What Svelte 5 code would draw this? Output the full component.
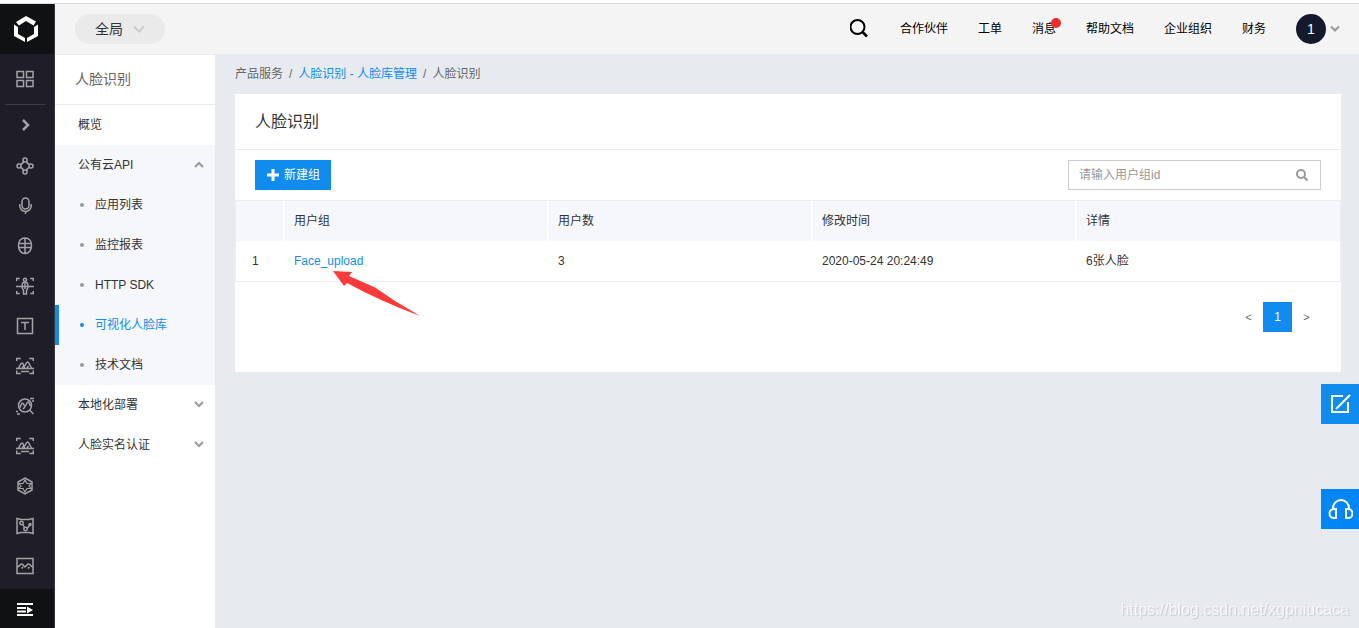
<script lang="ts">
	let region = 'global';
	let keyword = '';

	const topLinks = [
		{ title: '合作伙伴' },
		{ title: '工单' },
		{ title: '消息', unread: true },
		{ title: '帮助文档' },
		{ title: '企业组织' },
		{ title: '财务' }
	];

	const products = [
		{ name: 'nodes', label: '云服务' },
		{ name: 'mic', label: '语音技术' },
		{ name: 'globe', label: '人脸识别' },
		{ name: 'body', label: '人体分析' },
		{ name: 'text', label: '文字识别' },
		{ name: 'image', label: '图像识别' },
		{ name: 'search', label: '图像搜索' },
		{ name: 'image', label: '图像审核' },
		{ name: 'hexagon', label: '知识图谱' },
		{ name: 'graph', label: '智能创作' },
		{ name: 'picture', label: '图像增强' }
	];

	let menu = [
		{ title: '概览', open: false, entries: [] as string[] },
		{
			title: '公有云API',
			open: true,
			entries: ['应用列表', '监控报表', 'HTTP SDK', '可视化人脸库', '技术文档']
		},
		{ title: '本地化部署', open: false, entries: ['离线识别SDK', '私有化部署'] },
		{ title: '人脸实名认证', open: false, entries: ['方案管理', '数据统计'] }
	];
	let current = '可视化人脸库';

	const groups = [{ name: 'Face_upload', users: 3, updated: '2020-05-24 20:24:49', faces: 6 }];

	function toggle(title: string) {
		menu = menu.map((item) => (item.title === title ? { ...item, open: !item.open } : item));
	}
</script>

<div class="page">
	<aside class="rail">
		<a href="#home" class="logo" aria-label="首页">
			<svg width="26" height="28" viewBox="0 0 26 28">
				<path d="M13 1 23 6.500 20.500 10.500 13 6 6 10.500 3 7z" />
				<path d="M1 9.500 5 12V19L12 23V27L1 21z" />
				<path d="M25 9.500V21L14 27V23L21 19V12z" />
			</svg>
		</a>
		<a href="#all" class="all" aria-label="全部产品">
			<svg width="18" height="18" viewBox="0 0 18 18">
				<path d="M1 1.500h6.500v6H1zM10.500 1.500H17v6h-6.500zM1 10.500h6.500v6H1zM10.500 10.500H17v6h-6.500z" />
			</svg>
		</a>
		<button class="expand" aria-label="展开">
			<svg width="12" height="14" viewBox="0 0 12 14"><path d="m4 2 5 5-5 5" stroke-width="2.500" /></svg>
		</button>
		<nav>
			{#each products as product}
				<a href="#product" aria-label={product.label}>
					<svg width="18" height="18" viewBox="0 0 18 18">
						{#if product.name === 'nodes'}
							<circle cx="9" cy="3" r="2" /><circle cx="9" cy="15" r="2" />
							<circle cx="3" cy="9" r="2" /><circle cx="15" cy="9" r="2" />
							<path d="M7.500 4.500C7 6.500 6.500 7 4.500 7.500M10.500 4.500c.500 2 1 2.500 3 3M4.500 10.500c2 .500 2.500 1 3 3M13.500 10.500c-2 .500-2.500 1-3 3" stroke-width="1.800" />
						{:else if product.name === 'mic'}
							<rect x="6" y="1" width="7" height="11" rx="3.500" />
							<path d="M3.800 7v2a5.700 5.500 0 0 0 11.400 0V7M9.500 14.500V17" />
						{:else if product.name === 'globe'}
							<path d="M9 1c4 0 6.500 3 6.500 7.500S13 16.500 9 16.500s-6.500-3.500-6.500-8S5 1 9 1zM9 1v15.500M2.500 6.500h13M2.500 10.500h13" />
						{:else if product.name === 'body'}
							<path d="M.700 4V1.500h3M14.300 1.500h3V4M.700 14v2.500h3M14.300 16.500h3V14M0 9.500h18" />
							<circle cx="9" cy="2.800" r="1.600" />
							<path d="M9 5C7 5 6 7 6 9.500c0 2 1 2.500 1.500 4V17h3v-3.500c.500-1.500 1.500-2 1.500-4C12 7 11 5 9 5zM9 6v6" />
						{:else if product.name === 'text'}
							<path d="M1.500 1.500h15v15h-15zM5 5.500h8M9 5.500V13" />
						{:else if product.name === 'image'}
							<path d="M.700 4V1.500h4M13.300 1.500h4V4M.700 13.500v3h4M13.300 16.500h4v-3M5 14.500h8M0 11.500h18" />
							<path d="M2.500 11C4 9 4.500 6 6 6s1.500 3 2.500 3S10 5 11.500 5s2.500 4 4 6M6 11l1.500-2L9 11m2 0 1.500-2" />
						{:else if product.name === 'search'}
							<circle cx="9" cy="8.500" r="6.500" />
							<path d="m13.500 13 4 4M3.500 11C5 9.500 5 6 6.500 6S8 9.500 9 9.500 10.500 5 12 5s1.500 3 2.500 4M7 12l2-2M0 14.500h2M1 17h3M14 1.500h4M16 4h2" />
						{:else if product.name === 'hexagon'}
							<path d="m9 1 7 4v8l-7 4-7-4V5z" />
							<path d="m9 3 2 3.500h4L13 9l2 2.500h-4L9 15l-2-3.500H3L5 9 3 6.500h4z" stroke-width="1.200" />
						{:else if product.name === 'graph'}
							<path d="M1 1.500 5 2.500h8l4-1v15l-4-1H5l-4 1zM6.500 7l2 3.500M11 11.500l2.500-3" />
							<circle cx="5.500" cy="6" r="1.700" /><circle cx="9.500" cy="12" r="1.700" /><circle cx="14" cy="7.500" r="1" />
						{:else}
							<path d="M1 1.500h16v15H1zM1 10c3 0 2.500-3 4.500-3S8 10 9 10s1.500-3 3.500-3S15 10 17 10M5.500 11.500 7 10M12 11.500l1.500-1.500" />
						{/if}
					</svg>
				</a>
			{/each}
		</nav>
		<button class="collapse" aria-label="收起导航">
			<svg width="16" height="14" viewBox="0 0 16 14">
				<path d="M0 2h16M0 6h9M0 9.500h9M0 13h16" />
				<path class="tip" d="m10 4.500 6 3.500-6 3.500z" />
			</svg>
		</button>
	</aside>

	<div class="content">
		<header>
			<label class="region">
				<select bind:value={region} aria-label="区域">
					<option value="global">全局</option>
				</select>
				<svg width="12" height="8" viewBox="0 0 12 8"><path d="m1 1.500 5 5 5-5" /></svg>
			</label>
			<div class="top-right">
				<button class="find" aria-label="搜索">
					<svg width="20" height="20" viewBox="0 0 20 20">
						<circle cx="7.500" cy="8" r="7" /><path d="m12.500 13 4.500 4.500" stroke-width="2.500" />
					</svg>
				</button>
				{#each topLinks as link}
					<a href="#top" class:unread={link.unread}>{link.title}</a>
				{/each}
				<button class="user" aria-label="账户">
					<span>1</span>
					<svg width="10" height="8" viewBox="0 0 10 8"><path d="m1 1.500 4 4 4-4" /></svg>
				</button>
			</div>
		</header>

		<div class="body">
			<nav class="menu">
				<h2>人脸识别</h2>
				<ul>
					{#each menu as item}
						<li class:open={item.open}>
							{#if item.entries.length}
								<button class="row" on:click={() => toggle(item.title)}>
									{item.title}
									<svg width="10" height="8" viewBox="0 0 10 8">
										<path d={item.open ? 'm1 6 4-4 4 4' : 'm1 1 4 4 4-4'} />
									</svg>
								</button>
							{:else}
								<a href="#overview" class="row">{item.title}</a>
							{/if}
							{#if item.open}
								<ul>
									{#each item.entries as entry}
										<li>
											<a href="#entry" class="entry" class:active={entry === current} on:click={() => (current = entry)}>
												{entry}
											</a>
										</li>
									{/each}
								</ul>
							{/if}
						</li>
					{/each}
				</ul>
			</nav>

			<main>
				<div class="breadcrumb">
					<span>产品服务</span><i>/</i><a href="#library">人脸识别 - 人脸库管理</a><i>/</i><span>人脸识别</span>
				</div>
				<section class="card">
					<h1>人脸识别</h1>
					<div class="toolbar">
						<button class="create">
							<svg width="12" height="12" viewBox="0 0 12 12"><path d="M6 0v12M0 6h12" /></svg>
							新建组
						</button>
						<label class="search">
							<input type="text" placeholder="请输入用户组id" aria-label="用户组id" bind:value={keyword} />
							<svg width="12" height="12" viewBox="0 0 12 12">
								<circle cx="5" cy="5" r="4" /><path d="m8 8 3.500 3.500" />
							</svg>
						</label>
					</div>
					<table>
						<thead>
							<tr>
								<th class="index"></th>
								<th>用户组</th>
								<th>用户数</th>
								<th>修改时间</th>
								<th>详情</th>
							</tr>
						</thead>
						<tbody>
							{#each groups as group, i}
								<tr>
									<td class="index">{i + 1}</td>
									<td>
										<a href="#group" class="group">
											{group.name}
											<svg class="pointer" width="90" height="48" viewBox="0 0 90 48">
												<path d="M1 1 20 2 17 6 43 17.500 63 31 88 46 Q48 31 15 13L12 16z" />
											</svg>
										</a>
									</td>
									<td>{group.users}</td>
									<td>{group.updated}</td>
									<td>{group.faces}张人脸</td>
								</tr>
							{/each}
						</tbody>
					</table>
					<div class="pager">
						<button aria-label="上一页">&lt;</button>
						<button class="active">1</button>
						<button aria-label="下一页">&gt;</button>
					</div>
				</section>
			</main>
		</div>
	</div>

	<button class="float feedback" aria-label="反馈">
		<svg width="22" height="22" viewBox="0 0 22 22">
			<path d="M14 3H3v16h16V9M7 16 21 2" />
		</svg>
	</button>
	<button class="float support" aria-label="客服">
		<svg width="26" height="22" viewBox="0 0 26 22">
			<path d="M6 11v-1a8 8 0 0 1 16 0v1M9 11v9H7a4.500 4.500 0 0 1 0-9zM19 11v9h2a4.500 4.500 0 0 0 0-9z" />
		</svg>
	</button>
	<div class="watermark">https://blog.csdn.net/xgpniucaca</div>
</div>

<style>
	:global(body) {
		background: #fff;
		color: #333;
		font-family: 'Liberation Sans', 'Noto Sans CJK SC', sans-serif;
		font-size: 12px;
		line-height: 20px;
	}

	h1,
	h2,
	ul {
		margin: 0;
		padding: 0;
		font-weight: normal;
		list-style: none;
	}

	a {
		color: inherit;
		text-decoration: none;
	}

	button,
	input,
	select {
		margin: 0;
		padding: 0;
		border: none;
		border-radius: 0;
		background: transparent;
		color: inherit;
		font: inherit;
	}

	button {
		cursor: pointer;
	}

	svg {
		display: block;
		fill: none;
	}

	.page {
		display: flex;
		box-sizing: border-box;
		min-height: 100vh;
		padding-top: 3px;
		background: linear-gradient(#fff 3px, #d9dadc 3px);
	}

	.rail {
		display: flex;
		flex: none;
		flex-direction: column;
		width: 54px;
		margin-top: 1px;
		border-right: 1px solid #383543;
		background: #1f1e28;
	}

	.rail svg {
		stroke: #a3a3a6;
		stroke-width: 1.5;
	}

	.rail a,
	.rail button {
		display: flex;
		align-items: center;
		justify-content: center;
		height: 40px;
		padding-right: 4px;
	}

	.rail .logo {
		height: 50px;
		padding-right: 2px;
		background: #101112;
	}

	.rail .logo svg {
		fill: #fff;
		stroke: none;
	}

	.rail .all {
		height: 50px;
		margin: 0 9px 0 5px;
		padding: 0;
		border-bottom: 1px solid #3c3b49;
	}

	.rail nav {
		flex: 1;
		padding-top: 1px;
	}

	.rail .collapse {
		height: 39px;
		background: #101112;
	}

	.rail .collapse svg {
		stroke: #fff;
		stroke-width: 2;
	}

	.tip {
		fill: #fff;
		stroke: none;
	}

	.content {
		display: flex;
		flex: 1;
		flex-direction: column;
		min-width: 0;
		margin-top: 1px;
	}

	header {
		display: flex;
		align-items: center;
		justify-content: space-between;
		height: 50px;
		padding: 0 19px 0 20px;
		border-bottom: 1px solid #e7eaef;
		background: #f4f4f4;
		color: #000;
	}

	.region {
		display: flex;
		align-items: center;
		height: 30px;
		padding: 0 20px;
		border-radius: 15px;
		background: #eaeaea;
		color: #333;
		font-size: 14px;
	}

	.region select {
		width: 38px;
		appearance: none;
	}

	.region svg {
		stroke: #ccc;
		stroke-width: 2;
	}

	.top-right {
		display: flex;
		align-items: center;
		gap: 30px;
	}

	.find svg {
		stroke: #000;
		stroke-width: 2;
	}

	.unread {
		position: relative;
	}

	.unread::after {
		position: absolute;
		top: -1px;
		right: -5px;
		width: 10px;
		height: 10px;
		border-radius: 50%;
		background: #ee2b2b;
		content: '';
	}

	.user {
		display: flex;
		align-items: center;
		gap: 4px;
	}

	.user span {
		width: 30px;
		border-radius: 50%;
		background: #141a2c;
		color: #fff;
		font-size: 14px;
		line-height: 30px;
	}

	.user svg {
		stroke: #999;
		stroke-width: 2;
	}

	.body {
		display: flex;
		flex: 1;
	}

	.menu {
		flex: none;
		width: 160px;
		background: #fff;
	}

	.menu h2 {
		padding-left: 20px;
		border-bottom: 1px solid #e7eaef;
		color: #666;
		font-size: 14px;
		line-height: 49px;
	}

	.menu .open {
		background: #f5f7fb;
	}

	.row {
		display: flex;
		align-items: center;
		justify-content: space-between;
		box-sizing: border-box;
		width: 100%;
		height: 40px;
		padding: 0 11px 0 23px;
	}

	.row svg {
		stroke: #999;
		stroke-width: 2;
	}

	.entry {
		display: flex;
		align-items: center;
		gap: 11px;
		height: 40px;
		padding-left: 21px;
		border-left: 4px solid transparent;
	}

	.entry::before {
		width: 4px;
		height: 4px;
		border-radius: 50%;
		background: #999;
		content: '';
	}

	.entry.active {
		border-color: #108cee;
		color: #108cee;
	}

	.entry.active::before {
		background: #108cee;
	}

	main {
		flex: 1;
		min-width: 0;
		padding: 9px 18px 20px 20px;
		background: #e7ebf0;
	}

	.breadcrumb {
		display: flex;
		margin-bottom: 10px;
		color: #666;
	}

	.breadcrumb i {
		margin: 0 6px;
		font-style: normal;
	}

	.breadcrumb a,
	.group {
		color: #108cee;
	}

	.card {
		background: #fff;
	}

	h1 {
		padding: 0 20px;
		border-bottom: 1px solid #e7e9eb;
		font-size: 16px;
		line-height: 55px;
	}

	.toolbar {
		display: flex;
		align-items: center;
		justify-content: space-between;
		padding: 10px 20px;
	}

	.create {
		display: flex;
		align-items: center;
		gap: 5px;
		height: 30px;
		padding: 0 11px 0 12px;
		background: #108cee;
		color: #fff;
	}

	.create svg {
		stroke: #fff;
		stroke-width: 3;
	}

	.search {
		display: flex;
		align-items: center;
		box-sizing: border-box;
		width: 253px;
		height: 30px;
		padding: 0 12px 0 10px;
		border: 1px solid #ccc;
	}

	.search input {
		flex: 1;
		min-width: 0;
		outline: none;
	}

	.search input::placeholder {
		color: #999;
	}

	.search svg {
		stroke: #999;
		stroke-width: 2;
	}

	table {
		width: 100%;
		border: 1px solid #ebedf2;
		border-spacing: 0;
		table-layout: fixed;
	}

	th,
	td {
		height: 40px;
		padding: 0 10px;
		font-weight: normal;
		text-align: left;
	}

	th {
		background: #f5f7fb;
	}

	th:not(:last-child) {
		border-right: 1px solid #fff;
	}

	.index {
		width: 27px;
	}

	td.index {
		padding-left: 16px;
	}

	.group {
		position: relative;
	}

	/* arrow lies over the rows below the group name */
	.pointer {
		position: absolute;
		top: 16px;
		left: 38px;
		z-index: 1;
		fill: #fc3a3a;
		pointer-events: none;
	}

	.pager {
		display: flex;
		justify-content: flex-end;
		padding: 20px 20px 40px;
	}

	.pager button {
		width: 29px;
		height: 30px;
		color: #666;
		font-size: 11px;
	}

	.pager .active {
		background: #108cee;
		color: #fff;
		font-size: 12px;
	}

	.float {
		position: fixed;
		right: 0;
		display: flex;
		align-items: center;
		justify-content: center;
		width: 38px;
		height: 40px;
		background: #108cee;
	}

	.float svg {
		flex: none;
		stroke: #fff;
		stroke-width: 2;
	}

	.feedback {
		bottom: 204px;
	}

	.support {
		bottom: 99px;
		background: #0086f6;
	}

	.watermark {
		position: fixed;
		right: 10px;
		bottom: 8px;
		color: #f6f7f9;
		font-size: 16px;
		text-shadow: 1px 1px 1px #c5c8cd;
	}
</style>
